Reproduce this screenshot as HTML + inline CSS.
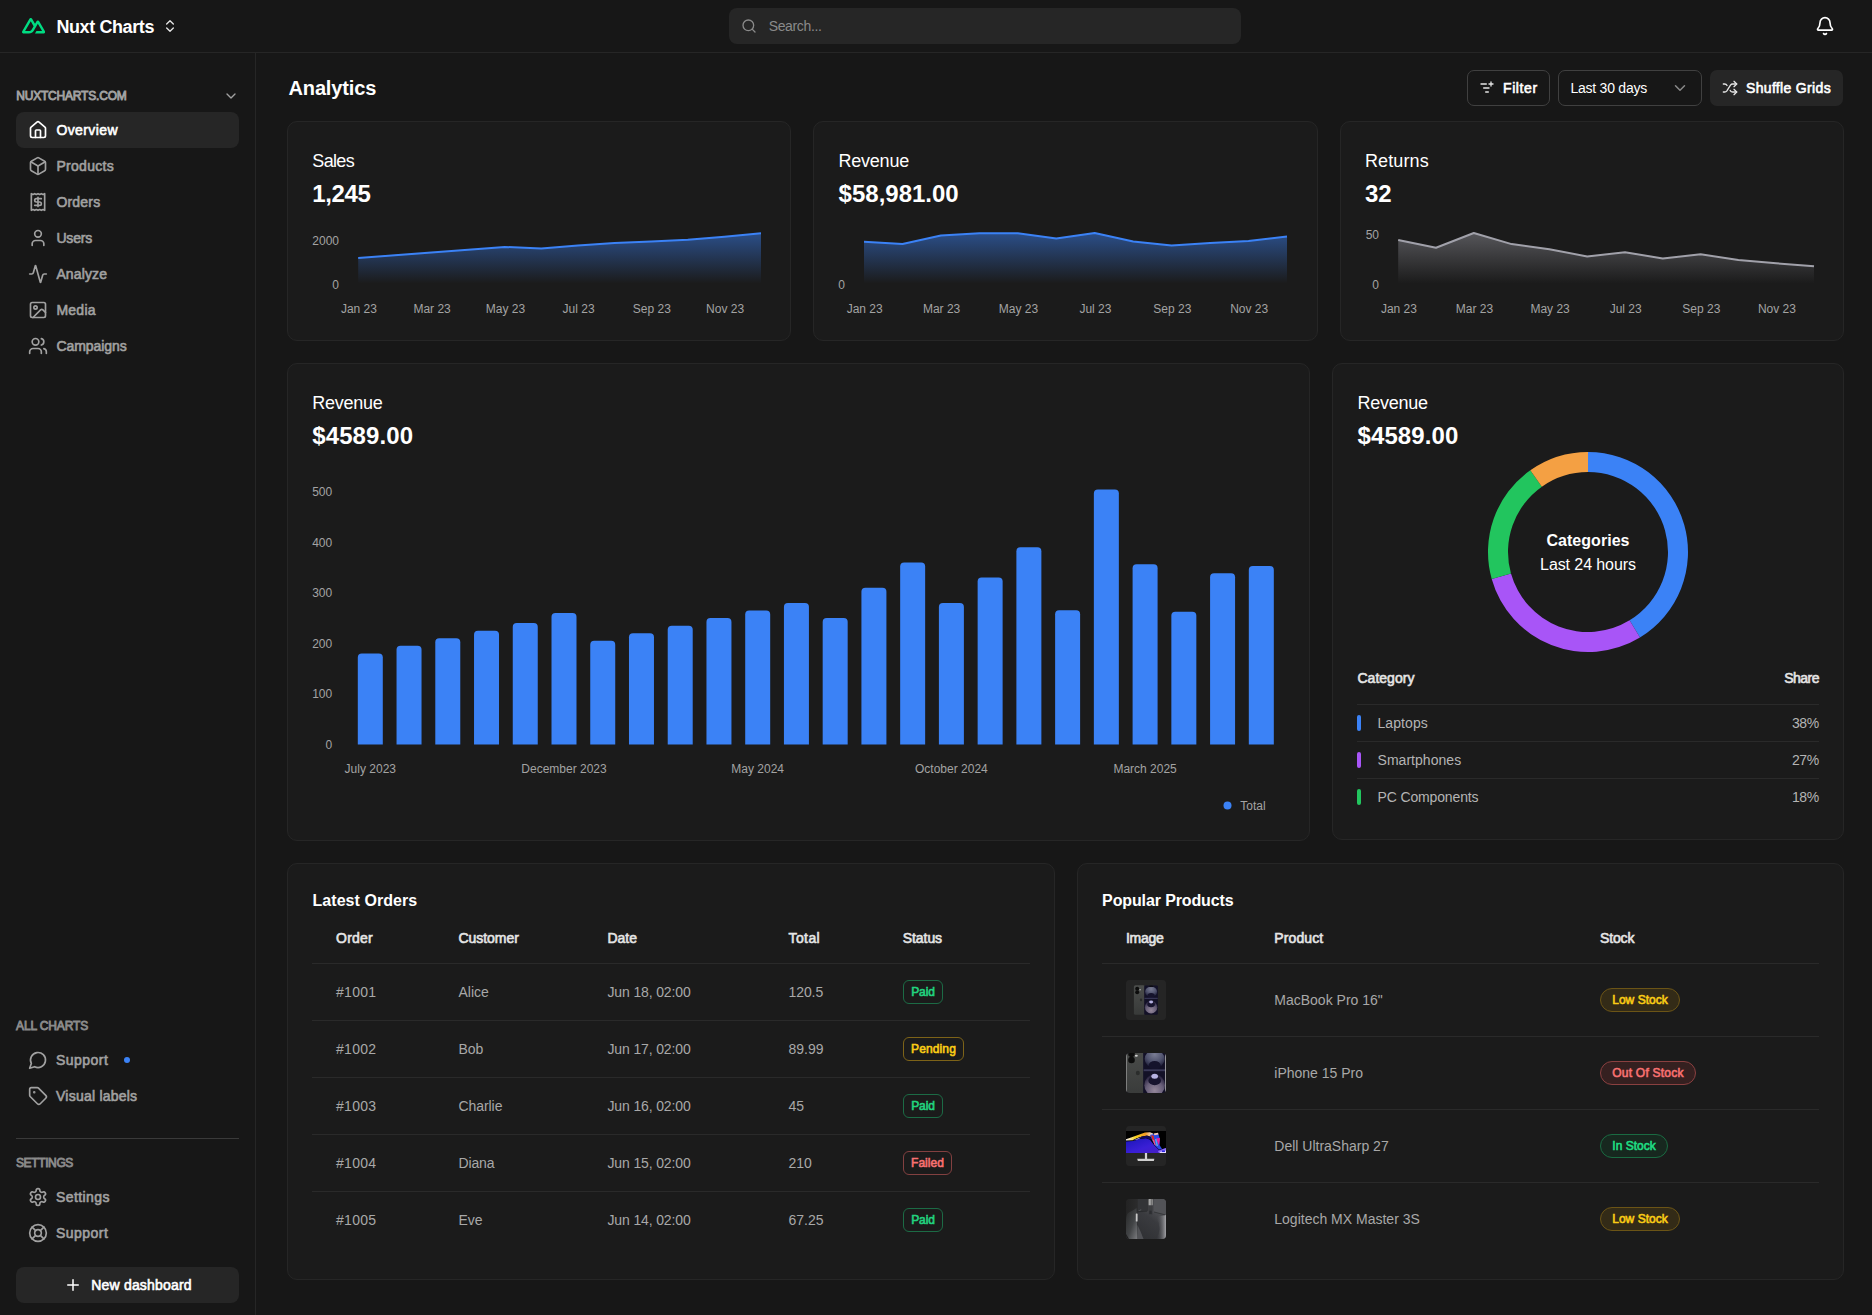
<!DOCTYPE html>
<html lang="en"><head><meta charset="utf-8"><title>Nuxt Charts - Analytics</title>
<style>
html,body{margin:0;padding:0;background:#171717;}
body{width:1872px;height:1315px;position:relative;overflow:hidden;font-family:"Liberation Sans", sans-serif;color:#fff;}
</style></head><body>
<div style="position:absolute;left:0px;top:52px;width:1872px;height:1px;box-sizing:border-box;background:#262626;"></div>
<svg style="position:absolute;left:22.3px;top:18.2px" width="23.2" height="15.5" viewBox="0 150 900 600"><path fill="#00dc82" d="M504.908 750H839.476C850.103 750.001 860.542 747.229 869.745 741.963C878.948 736.696 886.589 729.121 891.9 719.999C897.211 710.876 900.005 700.529 900 689.997C899.995 679.465 897.193 669.12 891.873 660.002L667.187 274.289C661.876 265.169 654.237 257.595 645.036 252.329C635.835 247.064 625.398 244.291 614.773 244.291C604.149 244.291 593.711 247.064 584.511 252.329C575.31 257.595 567.67 265.169 562.36 274.289L504.908 372.979L392.581 179.993C387.266 170.874 379.623 163.302 370.42 158.038C361.216 152.774 350.777 150.002 340.151 150.002C329.525 150.002 319.086 152.774 309.883 158.038C300.679 163.302 293.036 170.874 287.721 179.993L8.12649 660.002C2.80743 669.12 0.00462935 679.465 5.72978e-06 689.997C-0.00461789 700.529 2.78909 710.876 8.10015 719.999C13.4112 729.121 21.0523 736.696 30.255 741.963C39.4576 747.229 49.8973 750.001 60.524 750H270.538C353.748 750 415.112 713.775 457.336 643.101L559.849 467.145L614.757 372.979L779.547 655.834H559.849L504.908 750ZM267.114 655.737L120.551 655.704L340.249 278.586L449.87 467.145L376.474 593.175C348.433 639.03 316.577 655.737 267.114 655.737Z"/></svg>
<div style="position:absolute;top:16.56px;line-height:20px;font-size:18px;font-weight:700;color:#fff;white-space:nowrap;letter-spacing:-0.4px;left:56.4px;">Nuxt Charts</div>
<svg style="position:absolute;left:162.00px;top:18.00px" width="16" height="16" viewBox="0 0 24 24" fill="none" stroke="#e5e5e5" stroke-width="2" stroke-linecap="round" stroke-linejoin="round"><path d="m7 15 5 5 5-5"/><path d="m7 9 5-5 5 5"/></svg>
<div style="position:absolute;left:729px;top:8px;width:512px;height:36px;box-sizing:border-box;background:#262626;border-radius:8px;"></div>
<svg style="position:absolute;left:741.00px;top:18.00px" width="16" height="16" viewBox="0 0 24 24" fill="none" stroke="#8a8a8a" stroke-width="2" stroke-linecap="round" stroke-linejoin="round"><circle cx="11" cy="11" r="8"/><path d="m21 21-4.3-4.3"/></svg>
<div style="position:absolute;top:16.15px;line-height:20px;font-size:14px;font-weight:400;color:#8a8a8a;white-space:nowrap;letter-spacing:-0.35px;left:768.7px;">Search...</div>
<svg style="position:absolute;left:1815.00px;top:16.00px" width="20" height="20" viewBox="0 0 24 24" fill="none" stroke="#fff" stroke-width="2" stroke-linecap="round" stroke-linejoin="round"><path d="M10.268 21a2 2 0 0 0 3.464 0"/><path d="M3.262 15.326A1 1 0 0 0 4 17h16a1 1 0 0 0 .74-1.673C19.41 13.956 18 12.499 18 8A6 6 0 0 0 6 8c0 4.499-1.411 5.956-2.738 7.326"/></svg>
<div style="position:absolute;left:255px;top:53px;width:1px;height:1262px;box-sizing:border-box;background:#262626;"></div>
<div style="position:absolute;top:85.84px;line-height:20px;font-size:12px;font-weight:400;color:#a1a1a1;white-space:nowrap;-webkit-text-stroke:0.85px #a1a1a1;letter-spacing:-0.19px;left:16.2px;">NUXTCHARTS.COM</div>
<svg style="position:absolute;left:222.80px;top:88.00px" width="16" height="16" viewBox="0 0 24 24" fill="none" stroke="#a1a1a1" stroke-width="2" stroke-linecap="round" stroke-linejoin="round"><path d="m6 9 6 6 6-6"/></svg>
<div style="position:absolute;left:16px;top:112px;width:223px;height:36px;box-sizing:border-box;background:#262626;border-radius:8px;"></div>
<svg style="position:absolute;left:28.00px;top:120.00px" width="20" height="20" viewBox="0 0 24 24" fill="none" stroke="#fff" stroke-width="2" stroke-linecap="round" stroke-linejoin="round"><path d="M15 21v-8a1 1 0 0 0-1-1h-4a1 1 0 0 0-1 1v8"/><path d="M3 10a2 2 0 0 1 .709-1.528l7-5.999a2 2 0 0 1 2.582 0l7 5.999A2 2 0 0 1 21 10v9a2 2 0 0 1-2 2H5a2 2 0 0 1-2-2z"/></svg>
<div style="position:absolute;top:119.65px;line-height:20px;font-size:14px;font-weight:400;color:#fff;white-space:nowrap;-webkit-text-stroke:0.6px #fff;letter-spacing:0.41px;left:56.4px;">Overview</div>
<svg style="position:absolute;left:28.00px;top:156.00px" width="20" height="20" viewBox="0 0 24 24" fill="none" stroke="#a1a1a1" stroke-width="2" stroke-linecap="round" stroke-linejoin="round"><path d="M21 8a2 2 0 0 0-1-1.73l-7-4a2 2 0 0 0-2 0l-7 4A2 2 0 0 0 3 8v8a2 2 0 0 0 1 1.73l7 4a2 2 0 0 0 2 0l7-4A2 2 0 0 0 21 16Z"/><path d="m3.3 7 8.7 5 8.7-5"/><path d="M12 22V12"/></svg>
<div style="position:absolute;top:155.65px;line-height:20px;font-size:14px;font-weight:400;color:#a1a1a1;white-space:nowrap;-webkit-text-stroke:0.6px #a1a1a1;letter-spacing:0.31px;left:56.4px;">Products</div>
<svg style="position:absolute;left:28.00px;top:192.00px" width="20" height="20" viewBox="0 0 24 24" fill="none" stroke="#a1a1a1" stroke-width="2" stroke-linecap="round" stroke-linejoin="round"><path d="M4 2v20l2-1 2 1 2-1 2 1 2-1 2 1 2-1 2 1V2l-2 1-2-1-2 1-2-1-2 1-2-1-2 1Z"/><path d="M16 8h-6a2 2 0 1 0 0 4h4a2 2 0 1 1 0 4H8"/><path d="M12 17.5v-11"/></svg>
<div style="position:absolute;top:191.65px;line-height:20px;font-size:14px;font-weight:400;color:#a1a1a1;white-space:nowrap;-webkit-text-stroke:0.6px #a1a1a1;letter-spacing:0.2px;left:56.4px;">Orders</div>
<svg style="position:absolute;left:28.00px;top:228.00px" width="20" height="20" viewBox="0 0 24 24" fill="none" stroke="#a1a1a1" stroke-width="2" stroke-linecap="round" stroke-linejoin="round"><path d="M19 21v-2a4 4 0 0 0-4-4H9a4 4 0 0 0-4 4v2"/><circle cx="12" cy="7" r="4"/></svg>
<div style="position:absolute;top:227.65px;line-height:20px;font-size:14px;font-weight:400;color:#a1a1a1;white-space:nowrap;-webkit-text-stroke:0.6px #a1a1a1;letter-spacing:-0.17px;left:56.4px;">Users</div>
<svg style="position:absolute;left:28.00px;top:264.00px" width="20" height="20" viewBox="0 0 24 24" fill="none" stroke="#a1a1a1" stroke-width="2" stroke-linecap="round" stroke-linejoin="round"><path d="M22 12h-2.48a2 2 0 0 0-1.93 1.46l-2.35 8.36a.25.25 0 0 1-.48 0L9.24 2.18a.25.25 0 0 0-.48 0l-2.35 8.36A2 2 0 0 1 4.49 12H2"/></svg>
<div style="position:absolute;top:263.65px;line-height:20px;font-size:14px;font-weight:400;color:#a1a1a1;white-space:nowrap;-webkit-text-stroke:0.6px #a1a1a1;letter-spacing:0.13px;left:56.4px;">Analyze</div>
<svg style="position:absolute;left:28.00px;top:300.00px" width="20" height="20" viewBox="0 0 24 24" fill="none" stroke="#a1a1a1" stroke-width="2" stroke-linecap="round" stroke-linejoin="round"><rect width="18" height="18" x="3" y="3" rx="2" ry="2"/><circle cx="9" cy="9" r="2"/><path d="m21 15-3.086-3.086a2 2 0 0 0-2.828 0L6 21"/></svg>
<div style="position:absolute;top:299.65px;line-height:20px;font-size:14px;font-weight:400;color:#a1a1a1;white-space:nowrap;-webkit-text-stroke:0.6px #a1a1a1;letter-spacing:0.25px;left:56.4px;">Media</div>
<svg style="position:absolute;left:28.00px;top:336.00px" width="20" height="20" viewBox="0 0 24 24" fill="none" stroke="#a1a1a1" stroke-width="2" stroke-linecap="round" stroke-linejoin="round"><path d="M16 21v-2a4 4 0 0 0-4-4H6a4 4 0 0 0-4 4v2"/><circle cx="9" cy="7" r="4"/><path d="M22 21v-2a4 4 0 0 0-3-3.87"/><path d="M16 3.13a4 4 0 0 1 0 7.75"/></svg>
<div style="position:absolute;top:335.65px;line-height:20px;font-size:14px;font-weight:400;color:#a1a1a1;white-space:nowrap;-webkit-text-stroke:0.6px #a1a1a1;letter-spacing:-0.05px;left:56.4px;">Campaigns</div>
<div style="position:absolute;top:1015.64px;line-height:20px;font-size:12px;font-weight:400;color:#8a8a8a;white-space:nowrap;-webkit-text-stroke:0.85px #8a8a8a;letter-spacing:-0.12px;left:16px;">ALL CHARTS</div>
<svg style="position:absolute;left:28.00px;top:1050.00px" width="20" height="20" viewBox="0 0 24 24" fill="none" stroke="#a1a1a1" stroke-width="2" stroke-linecap="round" stroke-linejoin="round"><path d="M7.9 20A9 9 0 1 0 4 16.1L2 22Z"/></svg>
<div style="position:absolute;top:1049.95px;line-height:20px;font-size:14px;font-weight:400;color:#a1a1a1;white-space:nowrap;-webkit-text-stroke:0.6px #a1a1a1;letter-spacing:0.46px;left:56px;">Support</div>
<div style="position:absolute;left:124px;top:1057px;width:6px;height:6px;box-sizing:border-box;background:#3b82f6;border-radius:3px;"></div>
<svg style="position:absolute;left:28.00px;top:1086.00px" width="20" height="20" viewBox="0 0 24 24" fill="none" stroke="#a1a1a1" stroke-width="2" stroke-linecap="round" stroke-linejoin="round"><path d="M12.586 2.586A2 2 0 0 0 11.172 2H4a2 2 0 0 0-2 2v7.172a2 2 0 0 0 .586 1.414l8.704 8.704a2.426 2.426 0 0 0 3.42 0l6.58-6.58a2.426 2.426 0 0 0 0-3.42z"/><circle cx="7.5" cy="7.5" r=".5" fill="currentColor"/></svg>
<div style="position:absolute;top:1085.75px;line-height:20px;font-size:14px;font-weight:400;color:#a1a1a1;white-space:nowrap;-webkit-text-stroke:0.6px #a1a1a1;letter-spacing:0.23px;left:56px;">Visual labels</div>
<div style="position:absolute;left:16px;top:1138px;width:223px;height:1px;box-sizing:border-box;background:#3a3a3a;"></div>
<div style="position:absolute;top:1152.64px;line-height:20px;font-size:12px;font-weight:400;color:#8a8a8a;white-space:nowrap;-webkit-text-stroke:0.85px #8a8a8a;letter-spacing:-0.38px;left:16px;">SETTINGS</div>
<svg style="position:absolute;left:28.00px;top:1187.00px" width="20" height="20" viewBox="0 0 24 24" fill="none" stroke="#a1a1a1" stroke-width="2" stroke-linecap="round" stroke-linejoin="round"><path d="M12.22 2h-.44a2 2 0 0 0-2 2v.18a2 2 0 0 1-1 1.73l-.43.25a2 2 0 0 1-2 0l-.15-.08a2 2 0 0 0-2.73.73l-.22.38a2 2 0 0 0 .73 2.73l.15.1a2 2 0 0 1 1 1.72v.51a2 2 0 0 1-1 1.74l-.15.09a2 2 0 0 0-.73 2.73l.22.38a2 2 0 0 0 2.73.73l.15-.08a2 2 0 0 1 2 0l.43.25a2 2 0 0 1 1 1.73V20a2 2 0 0 0 2 2h.44a2 2 0 0 0 2-2v-.18a2 2 0 0 1 1-1.73l.43-.25a2 2 0 0 1 2 0l.15.08a2 2 0 0 0 2.73-.73l.22-.39a2 2 0 0 0-.73-2.73l-.15-.08a2 2 0 0 1-1-1.74v-.5a2 2 0 0 1 1-1.74l.15-.09a2 2 0 0 0 .73-2.73l-.22-.38a2 2 0 0 0-2.73-.73l-.15.08a2 2 0 0 1-2 0l-.43-.25a2 2 0 0 1-1-1.73V4a2 2 0 0 0-2-2z"/><circle cx="12" cy="12" r="3"/></svg>
<div style="position:absolute;top:1186.75px;line-height:20px;font-size:14px;font-weight:400;color:#a1a1a1;white-space:nowrap;-webkit-text-stroke:0.6px #a1a1a1;letter-spacing:0.4px;left:56px;">Settings</div>
<svg style="position:absolute;left:28.00px;top:1223.00px" width="20" height="20" viewBox="0 0 24 24" fill="none" stroke="#a1a1a1" stroke-width="2" stroke-linecap="round" stroke-linejoin="round"><circle cx="12" cy="12" r="10"/><path d="m4.93 4.93 4.24 4.24"/><path d="m14.83 9.17 4.24-4.24"/><path d="m14.83 14.83 4.24 4.24"/><path d="m9.17 14.83-4.24 4.24"/><circle cx="12" cy="12" r="4"/></svg>
<div style="position:absolute;top:1222.75px;line-height:20px;font-size:14px;font-weight:400;color:#a1a1a1;white-space:nowrap;-webkit-text-stroke:0.6px #a1a1a1;letter-spacing:0.46px;left:56px;">Support</div>
<div style="position:absolute;left:16px;top:1267px;width:223px;height:36px;box-sizing:border-box;background:#262626;border-radius:8px;"></div>
<svg style="position:absolute;left:63.80px;top:1276.00px" width="18" height="18" viewBox="0 0 24 24" fill="none" stroke="#fff" stroke-width="2" stroke-linecap="round" stroke-linejoin="round"><path d="M5 12h14"/><path d="M12 5v14"/></svg>
<div style="position:absolute;top:1274.95px;line-height:20px;font-size:14px;font-weight:400;color:#fff;white-space:nowrap;-webkit-text-stroke:0.6px #fff;letter-spacing:0.18px;left:91.3px;">New dashboard</div>
<div style="position:absolute;top:78.37px;line-height:20px;font-size:20px;font-weight:700;color:#fff;white-space:nowrap;letter-spacing:-0.14px;left:288.5px;">Analytics</div>
<div style="position:absolute;left:1467px;top:70px;width:83px;height:36px;box-sizing:border-box;border:1px solid #404040;border-radius:7px;"></div>
<svg style="position:absolute;left:1479.30px;top:79.50px" width="16" height="16" viewBox="0 0 24 24" fill="none" stroke="#e5e5e5" stroke-width="2" stroke-linecap="round" stroke-linejoin="round"><path d="M10 18h4"/><path d="M11 6H3"/><path d="M15 6h6"/><path d="M18 9V3"/><path d="M7 12h8"/></svg>
<div style="position:absolute;top:78.15px;line-height:20px;font-size:14px;font-weight:400;color:#fff;white-space:nowrap;-webkit-text-stroke:0.6px #fff;letter-spacing:0.6px;left:1503px;">Filter</div>
<div style="position:absolute;left:1558px;top:70px;width:144px;height:36px;box-sizing:border-box;border:1px solid #404040;border-radius:7px;"></div>
<div style="position:absolute;top:78.15px;line-height:20px;font-size:14px;font-weight:400;color:#fff;white-space:nowrap;letter-spacing:-0.23px;left:1570.4px;">Last 30 days</div>
<svg style="position:absolute;left:1671.00px;top:79.00px" width="18" height="18" viewBox="0 0 24 24" fill="none" stroke="#8a8a8a" stroke-width="2" stroke-linecap="round" stroke-linejoin="round"><path d="m6 9 6 6 6-6"/></svg>
<div style="position:absolute;left:1710px;top:70px;width:133px;height:36px;box-sizing:border-box;background:#262626;border-radius:7px;"></div>
<svg style="position:absolute;left:1722.00px;top:80.00px" width="16" height="16" viewBox="0 0 24 24" fill="none" stroke="#e5e5e5" stroke-width="2" stroke-linecap="round" stroke-linejoin="round"><path d="m18 14 4 4-4 4"/><path d="m18 2 4 4-4 4"/><path d="M2 18h1.973a4 4 0 0 0 3.3-1.7l5.454-8.6a4 4 0 0 1 3.3-1.7H22"/><path d="M2 6h1.972a4 4 0 0 1 3.6 2.2"/><path d="M22 18h-6.041a4 4 0 0 1-3.3-1.8l-.359-.45"/></svg>
<div style="position:absolute;top:78.15px;line-height:20px;font-size:14px;font-weight:400;color:#fff;white-space:nowrap;-webkit-text-stroke:0.6px #fff;letter-spacing:0.33px;left:1746px;">Shuffle Grids</div>
<div style="position:absolute;left:287px;top:121px;width:504px;height:220px;box-sizing:border-box;background:#1b1b1b;border:1px solid #262626;border-radius:10px;"></div>
<div style="position:absolute;left:813px;top:121px;width:505px;height:220px;box-sizing:border-box;background:#1b1b1b;border:1px solid #262626;border-radius:10px;"></div>
<div style="position:absolute;left:1340px;top:121px;width:504px;height:220px;box-sizing:border-box;background:#1b1b1b;border:1px solid #262626;border-radius:10px;"></div>
<div style="position:absolute;left:287px;top:363px;width:1023px;height:478px;box-sizing:border-box;background:#1b1b1b;border:1px solid #262626;border-radius:10px;"></div>
<div style="position:absolute;left:1332px;top:363px;width:512px;height:477px;box-sizing:border-box;background:#1b1b1b;border:1px solid #262626;border-radius:10px;"></div>
<div style="position:absolute;left:287px;top:863px;width:768px;height:417px;box-sizing:border-box;background:#1b1b1b;border:1px solid #262626;border-radius:10px;"></div>
<div style="position:absolute;left:1077px;top:863px;width:767px;height:417px;box-sizing:border-box;background:#1b1b1b;border:1px solid #262626;border-radius:10px;"></div>
<svg style="position:absolute;left:0;top:0" width="1872" height="1315" viewBox="0 0 1872 1315" font-family='"Liberation Sans", sans-serif'><defs><linearGradient id="g1" x1="0" y1="0" x2="0" y2="1"><stop offset="0" stop-color="#3b82f6" stop-opacity="0.5"/><stop offset="1" stop-color="#3b82f6" stop-opacity="0"/></linearGradient></defs><polygon points="358.2,283.5 358.2,258.1 394.8,255.3 431.4,252.5 468.1,249.7 504.7,246.9 541.3,248.5 577.9,245.5 614.5,243.1 651.1,241.5 687.8,239.7 724.4,236.7 761.0,233.3 761.0,283.5" fill="url(#g1)"/><polyline points="358.2,258.1 394.8,255.3 431.4,252.5 468.1,249.7 504.7,246.9 541.3,248.5 577.9,245.5 614.5,243.1 651.1,241.5 687.8,239.7 724.4,236.7 761.0,233.3" fill="none" stroke="#3b82f6" stroke-width="2" stroke-linejoin="round"/><text x="358.9" y="312.8" text-anchor="middle" font-size="12" fill="#a3a3a3">Jan 23</text><text x="432.1" y="312.8" text-anchor="middle" font-size="12" fill="#a3a3a3">Mar 23</text><text x="505.4" y="312.8" text-anchor="middle" font-size="12" fill="#a3a3a3">May 23</text><text x="578.6" y="312.8" text-anchor="middle" font-size="12" fill="#a3a3a3">Jul 23</text><text x="651.8" y="312.8" text-anchor="middle" font-size="12" fill="#a3a3a3">Sep 23</text><text x="725.1" y="312.8" text-anchor="middle" font-size="12" fill="#a3a3a3">Nov 23</text><text x="339" y="244.9" text-anchor="end" font-size="12" fill="#a3a3a3">2000</text><text x="339" y="288.7" text-anchor="end" font-size="12" fill="#a3a3a3">0</text><defs><linearGradient id="g2" x1="0" y1="0" x2="0" y2="1"><stop offset="0" stop-color="#3b82f6" stop-opacity="0.5"/><stop offset="1" stop-color="#3b82f6" stop-opacity="0"/></linearGradient></defs><polygon points="864.0,283.5 864.0,241.7 902.5,244.1 940.9,235.4 979.4,233.3 1017.8,233.3 1056.3,238.4 1094.7,233.0 1133.2,241.4 1171.6,245.6 1210.1,242.9 1248.5,241.1 1287.0,236.6 1287.0,283.5" fill="url(#g2)"/><polyline points="864.0,241.7 902.5,244.1 940.9,235.4 979.4,233.3 1017.8,233.3 1056.3,238.4 1094.7,233.0 1133.2,241.4 1171.6,245.6 1210.1,242.9 1248.5,241.1 1287.0,236.6" fill="none" stroke="#3b82f6" stroke-width="2" stroke-linejoin="round"/><text x="864.7" y="312.8" text-anchor="middle" font-size="12" fill="#a3a3a3">Jan 23</text><text x="941.6" y="312.8" text-anchor="middle" font-size="12" fill="#a3a3a3">Mar 23</text><text x="1018.5" y="312.8" text-anchor="middle" font-size="12" fill="#a3a3a3">May 23</text><text x="1095.4" y="312.8" text-anchor="middle" font-size="12" fill="#a3a3a3">Jul 23</text><text x="1172.3" y="312.8" text-anchor="middle" font-size="12" fill="#a3a3a3">Sep 23</text><text x="1249.2" y="312.8" text-anchor="middle" font-size="12" fill="#a3a3a3">Nov 23</text><text x="845" y="288.7" text-anchor="end" font-size="12" fill="#a3a3a3">0</text><defs><linearGradient id="g3" x1="0" y1="0" x2="0" y2="1"><stop offset="0" stop-color="#a1a1aa" stop-opacity="0.44"/><stop offset="1" stop-color="#a1a1aa" stop-opacity="0"/></linearGradient></defs><polygon points="1398.2,283.5 1398.2,239.9 1436.0,247.7 1473.8,233.0 1511.6,244.1 1549.4,249.2 1587.2,256.4 1625.0,252.2 1662.8,258.5 1700.6,254.3 1738.4,260.0 1776.2,263.3 1814.0,266.2 1814.0,283.5" fill="url(#g3)"/><polyline points="1398.2,239.9 1436.0,247.7 1473.8,233.0 1511.6,244.1 1549.4,249.2 1587.2,256.4 1625.0,252.2 1662.8,258.5 1700.6,254.3 1738.4,260.0 1776.2,263.3 1814.0,266.2" fill="none" stroke="#a1a1aa" stroke-width="2" stroke-linejoin="round"/><text x="1398.9" y="312.8" text-anchor="middle" font-size="12" fill="#a3a3a3">Jan 23</text><text x="1474.5" y="312.8" text-anchor="middle" font-size="12" fill="#a3a3a3">Mar 23</text><text x="1550.1" y="312.8" text-anchor="middle" font-size="12" fill="#a3a3a3">May 23</text><text x="1625.7" y="312.8" text-anchor="middle" font-size="12" fill="#a3a3a3">Jul 23</text><text x="1701.3" y="312.8" text-anchor="middle" font-size="12" fill="#a3a3a3">Sep 23</text><text x="1776.9" y="312.8" text-anchor="middle" font-size="12" fill="#a3a3a3">Nov 23</text><text x="1379" y="239.0" text-anchor="end" font-size="12" fill="#a3a3a3">50</text><text x="1379" y="288.7" text-anchor="end" font-size="12" fill="#a3a3a3">0</text><path fill="#3b82f6" d="M357.80,744.4 V657.43 Q357.80,653.43 361.80,653.43 H378.80 Q382.80,653.43 382.80,657.43 V744.4 Z"/><path fill="#3b82f6" d="M396.54,744.4 V649.85 Q396.54,645.85 400.54,645.85 H417.54 Q421.54,645.85 421.54,649.85 V744.4 Z"/><path fill="#3b82f6" d="M435.28,744.4 V642.27 Q435.28,638.27 439.28,638.27 H456.28 Q460.28,638.27 460.28,642.27 V744.4 Z"/><path fill="#3b82f6" d="M474.02,744.4 V634.68 Q474.02,630.68 478.02,630.68 H495.02 Q499.02,630.68 499.02,634.68 V744.4 Z"/><path fill="#3b82f6" d="M512.76,744.4 V627.10 Q512.76,623.10 516.76,623.10 H533.76 Q537.76,623.10 537.76,627.10 V744.4 Z"/><path fill="#3b82f6" d="M551.50,744.4 V617.00 Q551.50,613.00 555.50,613.00 H572.50 Q576.50,613.00 576.50,617.00 V744.4 Z"/><path fill="#3b82f6" d="M590.24,744.4 V644.79 Q590.24,640.79 594.24,640.79 H611.24 Q615.24,640.79 615.24,644.79 V744.4 Z"/><path fill="#3b82f6" d="M628.98,744.4 V637.21 Q628.98,633.21 632.98,633.21 H649.98 Q653.98,633.21 653.98,637.21 V744.4 Z"/><path fill="#3b82f6" d="M667.72,744.4 V629.63 Q667.72,625.63 671.72,625.63 H688.72 Q692.72,625.63 692.72,629.63 V744.4 Z"/><path fill="#3b82f6" d="M706.46,744.4 V622.05 Q706.46,618.05 710.46,618.05 H727.46 Q731.46,618.05 731.46,622.05 V744.4 Z"/><path fill="#3b82f6" d="M745.20,744.4 V614.47 Q745.20,610.47 749.20,610.47 H766.20 Q770.20,610.47 770.20,614.47 V744.4 Z"/><path fill="#3b82f6" d="M783.94,744.4 V606.89 Q783.94,602.89 787.94,602.89 H804.94 Q808.94,602.89 808.94,606.89 V744.4 Z"/><path fill="#3b82f6" d="M822.68,744.4 V622.05 Q822.68,618.05 826.68,618.05 H843.68 Q847.68,618.05 847.68,622.05 V744.4 Z"/><path fill="#3b82f6" d="M861.42,744.4 V591.73 Q861.42,587.73 865.42,587.73 H882.42 Q886.42,587.73 886.42,591.73 V744.4 Z"/><path fill="#3b82f6" d="M900.16,744.4 V566.46 Q900.16,562.46 904.16,562.46 H921.16 Q925.16,562.46 925.16,566.46 V744.4 Z"/><path fill="#3b82f6" d="M938.90,744.4 V606.89 Q938.90,602.89 942.90,602.89 H959.90 Q963.90,602.89 963.90,606.89 V744.4 Z"/><path fill="#3b82f6" d="M977.64,744.4 V581.62 Q977.64,577.62 981.64,577.62 H998.64 Q1002.64,577.62 1002.64,581.62 V744.4 Z"/><path fill="#3b82f6" d="M1016.38,744.4 V551.29 Q1016.38,547.29 1020.38,547.29 H1037.38 Q1041.38,547.29 1041.38,551.29 V744.4 Z"/><path fill="#3b82f6" d="M1055.12,744.4 V614.22 Q1055.12,610.22 1059.12,610.22 H1076.12 Q1080.12,610.22 1080.12,614.22 V744.4 Z"/><path fill="#3b82f6" d="M1093.86,744.4 V493.58 Q1093.86,489.58 1097.86,489.58 H1114.86 Q1118.86,489.58 1118.86,493.58 V744.4 Z"/><path fill="#3b82f6" d="M1132.60,744.4 V568.22 Q1132.60,564.22 1136.60,564.22 H1153.60 Q1157.60,564.22 1157.60,568.22 V744.4 Z"/><path fill="#3b82f6" d="M1171.34,744.4 V615.68 Q1171.34,611.68 1175.34,611.68 H1192.34 Q1196.34,611.68 1196.34,615.68 V744.4 Z"/><path fill="#3b82f6" d="M1210.08,744.4 V577.22 Q1210.08,573.22 1214.08,573.22 H1231.08 Q1235.08,573.22 1235.08,577.22 V744.4 Z"/><path fill="#3b82f6" d="M1248.82,744.4 V569.89 Q1248.82,565.89 1252.82,565.89 H1269.82 Q1273.82,565.89 1273.82,569.89 V744.4 Z"/><text x="370.3" y="773.1" text-anchor="middle" font-size="12" fill="#a3a3a3">July 2023</text><text x="564.0" y="773.1" text-anchor="middle" font-size="12" fill="#a3a3a3">December 2023</text><text x="757.7" y="773.1" text-anchor="middle" font-size="12" fill="#a3a3a3">May 2024</text><text x="951.4" y="773.1" text-anchor="middle" font-size="12" fill="#a3a3a3">October 2024</text><text x="1145.1" y="773.1" text-anchor="middle" font-size="12" fill="#a3a3a3">March 2025</text><text x="332.2" y="748.9" text-anchor="end" font-size="12" fill="#a3a3a3">0</text><text x="332.2" y="698.4" text-anchor="end" font-size="12" fill="#a3a3a3">100</text><text x="332.2" y="647.8" text-anchor="end" font-size="12" fill="#a3a3a3">200</text><text x="332.2" y="597.3" text-anchor="end" font-size="12" fill="#a3a3a3">300</text><text x="332.2" y="546.7" text-anchor="end" font-size="12" fill="#a3a3a3">400</text><text x="332.2" y="496.2" text-anchor="end" font-size="12" fill="#a3a3a3">500</text><circle cx="1227.5" cy="805.6" r="4" fill="#3b82f6"/><text x="1240.3" y="809.9" font-size="12" fill="#a3a3a3">Total</text><path fill="#3b82f6" d="M1588.00,452.00 A100,100 0 0 1 1639.96,637.44 L1629.57,620.35 A80,80 0 0 0 1588.00,472.00 Z"/><path fill="#a855f7" d="M1639.96,637.44 A100,100 0 0 1 1491.71,578.98 L1510.97,573.58 A80,80 0 0 0 1629.57,620.35 Z"/><path fill="#22c55e" d="M1491.71,578.98 A100,100 0 0 1 1530.33,470.30 L1541.87,486.64 A80,80 0 0 0 1510.97,573.58 Z"/><path fill="#f4a043" d="M1530.33,470.30 A100,100 0 0 1 1588.00,452.00 L1588.00,472.00 A80,80 0 0 0 1541.87,486.64 Z"/></svg>
<div style="position:absolute;top:150.56px;line-height:20px;font-size:18px;font-weight:400;color:#fff;white-space:nowrap;letter-spacing:-0.65px;left:312.3px;">Sales</div>
<div style="position:absolute;top:183.88px;line-height:20px;font-size:24px;font-weight:700;color:#fff;white-space:nowrap;letter-spacing:-0.35px;left:312.3px;">1,245</div>
<div style="position:absolute;top:150.56px;line-height:20px;font-size:18px;font-weight:400;color:#fff;white-space:nowrap;letter-spacing:-0.25px;left:838.6px;">Revenue</div>
<div style="position:absolute;top:183.88px;line-height:20px;font-size:24px;font-weight:700;color:#fff;white-space:nowrap;left:838.6px;">$58,981.00</div>
<div style="position:absolute;top:150.56px;line-height:20px;font-size:18px;font-weight:400;color:#fff;white-space:nowrap;letter-spacing:0.14px;left:1364.9px;">Returns</div>
<div style="position:absolute;top:183.88px;line-height:20px;font-size:24px;font-weight:700;color:#fff;white-space:nowrap;left:1364.9px;">32</div>
<div style="position:absolute;top:392.76px;line-height:20px;font-size:18px;font-weight:400;color:#fff;white-space:nowrap;letter-spacing:-0.25px;left:312.3px;">Revenue</div>
<div style="position:absolute;top:425.98px;line-height:20px;font-size:24px;font-weight:700;color:#fff;white-space:nowrap;letter-spacing:0.09px;left:312.3px;">$4589.00</div>
<div style="position:absolute;top:392.76px;line-height:20px;font-size:18px;font-weight:400;color:#fff;white-space:nowrap;letter-spacing:-0.25px;left:1357.5px;">Revenue</div>
<div style="position:absolute;top:425.98px;line-height:20px;font-size:24px;font-weight:700;color:#fff;white-space:nowrap;letter-spacing:0.09px;left:1357.5px;">$4589.00</div>
<div style="position:absolute;top:531.06px;line-height:20px;font-size:16px;font-weight:700;color:#fff;white-space:nowrap;letter-spacing:0.03px;left:1388px;width:400px;text-align:center;">Categories</div>
<div style="position:absolute;top:555.16px;line-height:20px;font-size:16px;font-weight:400;color:#fff;white-space:nowrap;letter-spacing:-0.09px;left:1388px;width:400px;text-align:center;">Last 24 hours</div>
<div style="position:absolute;top:667.95px;line-height:20px;font-size:14px;font-weight:400;color:#e5e5e5;white-space:nowrap;-webkit-text-stroke:0.6px #e5e5e5;letter-spacing:0.01px;left:1357.5px;">Category</div>
<div style="position:absolute;top:667.95px;line-height:20px;font-size:14px;font-weight:400;color:#e5e5e5;white-space:nowrap;-webkit-text-stroke:0.6px #e5e5e5;letter-spacing:-0.5px;right:53px;">Share</div>
<div style="position:absolute;left:1357px;top:704px;width:462px;height:1px;box-sizing:border-box;background:#2a2a2a;"></div>
<div style="position:absolute;left:1357px;top:715px;width:4px;height:16px;box-sizing:border-box;background:#3b82f6;border-radius:2px;"></div>
<div style="position:absolute;top:712.75px;line-height:20px;font-size:14px;font-weight:400;color:#b4b4b4;white-space:nowrap;letter-spacing:0.08px;left:1377.5px;">Laptops</div>
<div style="position:absolute;top:712.75px;line-height:20px;font-size:14px;font-weight:400;color:#b4b4b4;white-space:nowrap;letter-spacing:-0.3px;right:53px;">38%</div>
<div style="position:absolute;left:1357px;top:741px;width:462px;height:1px;box-sizing:border-box;background:#2a2a2a;"></div>
<div style="position:absolute;left:1357px;top:752px;width:4px;height:16px;box-sizing:border-box;background:#a855f7;border-radius:2px;"></div>
<div style="position:absolute;top:749.75px;line-height:20px;font-size:14px;font-weight:400;color:#b4b4b4;white-space:nowrap;letter-spacing:0.04px;left:1377.5px;">Smartphones</div>
<div style="position:absolute;top:749.75px;line-height:20px;font-size:14px;font-weight:400;color:#b4b4b4;white-space:nowrap;letter-spacing:-0.3px;right:53px;">27%</div>
<div style="position:absolute;left:1357px;top:778px;width:462px;height:1px;box-sizing:border-box;background:#2a2a2a;"></div>
<div style="position:absolute;left:1357px;top:789px;width:4px;height:16px;box-sizing:border-box;background:#22c55e;border-radius:2px;"></div>
<div style="position:absolute;top:786.75px;line-height:20px;font-size:14px;font-weight:400;color:#b4b4b4;white-space:nowrap;letter-spacing:-0.14px;left:1377.5px;">PC Components</div>
<div style="position:absolute;top:786.75px;line-height:20px;font-size:14px;font-weight:400;color:#b4b4b4;white-space:nowrap;letter-spacing:-0.3px;right:53px;">18%</div>
<div style="position:absolute;top:890.66px;line-height:20px;font-size:16px;font-weight:700;color:#fff;white-space:nowrap;letter-spacing:0.05px;left:312.5px;">Latest Orders</div>
<div style="position:absolute;top:927.75px;line-height:20px;font-size:14px;font-weight:400;color:#e5e5e5;white-space:nowrap;-webkit-text-stroke:0.6px #e5e5e5;letter-spacing:0.18px;left:336.1px;">Order</div>
<div style="position:absolute;top:927.75px;line-height:20px;font-size:14px;font-weight:400;color:#e5e5e5;white-space:nowrap;-webkit-text-stroke:0.6px #e5e5e5;letter-spacing:-0.05px;left:458.5px;">Customer</div>
<div style="position:absolute;top:927.75px;line-height:20px;font-size:14px;font-weight:400;color:#e5e5e5;white-space:nowrap;-webkit-text-stroke:0.6px #e5e5e5;letter-spacing:-0.02px;left:607.5px;">Date</div>
<div style="position:absolute;top:927.75px;line-height:20px;font-size:14px;font-weight:400;color:#e5e5e5;white-space:nowrap;-webkit-text-stroke:0.6px #e5e5e5;letter-spacing:0.4px;left:788.5px;">Total</div>
<div style="position:absolute;top:927.75px;line-height:20px;font-size:14px;font-weight:400;color:#e5e5e5;white-space:nowrap;-webkit-text-stroke:0.6px #e5e5e5;letter-spacing:-0.08px;left:902.8px;">Status</div>
<div style="position:absolute;left:312px;top:963px;width:718px;height:1px;box-sizing:border-box;background:#2a2a2a;"></div>
<div style="position:absolute;top:981.75px;line-height:20px;font-size:14px;font-weight:400;color:#a8a8a8;white-space:nowrap;letter-spacing:0.23px;left:336.1px;">#1001</div>
<div style="position:absolute;top:981.75px;line-height:20px;font-size:14px;font-weight:400;color:#a8a8a8;white-space:nowrap;left:458.5px;">Alice</div>
<div style="position:absolute;top:981.75px;line-height:20px;font-size:14px;font-weight:400;color:#a8a8a8;white-space:nowrap;letter-spacing:-0.14px;left:607.5px;">Jun 18, 02:00</div>
<div style="position:absolute;top:981.75px;line-height:20px;font-size:14px;font-weight:400;color:#a8a8a8;white-space:nowrap;letter-spacing:-0.09px;left:788.5px;">120.5</div>
<div style="position:absolute;left:903px;top:980px;width:40px;height:24px;box-sizing:border-box;border:1px solid #1c6b45;border-radius:6px;"></div>
<div style="position:absolute;top:982.04px;line-height:20px;font-size:12px;font-weight:400;color:#22d37f;white-space:nowrap;-webkit-text-stroke:0.6px #22d37f;letter-spacing:-0.11px;left:723.0px;width:400px;text-align:center;">Paid</div>
<div style="position:absolute;left:312px;top:1020px;width:718px;height:1px;box-sizing:border-box;background:#2a2a2a;"></div>
<div style="position:absolute;top:1038.75px;line-height:20px;font-size:14px;font-weight:400;color:#a8a8a8;white-space:nowrap;letter-spacing:0.23px;left:336.1px;">#1002</div>
<div style="position:absolute;top:1038.75px;line-height:20px;font-size:14px;font-weight:400;color:#a8a8a8;white-space:nowrap;left:458.5px;">Bob</div>
<div style="position:absolute;top:1038.75px;line-height:20px;font-size:14px;font-weight:400;color:#a8a8a8;white-space:nowrap;letter-spacing:-0.14px;left:607.5px;">Jun 17, 02:00</div>
<div style="position:absolute;top:1038.75px;line-height:20px;font-size:14px;font-weight:400;color:#a8a8a8;white-space:nowrap;left:788.5px;">89.99</div>
<div style="position:absolute;left:903px;top:1037px;width:61px;height:24px;box-sizing:border-box;border:1px solid #7d6318;border-radius:6px;"></div>
<div style="position:absolute;top:1039.04px;line-height:20px;font-size:12px;font-weight:400;color:#facc15;white-space:nowrap;-webkit-text-stroke:0.6px #facc15;letter-spacing:0.12px;left:733.5px;width:400px;text-align:center;">Pending</div>
<div style="position:absolute;left:312px;top:1077px;width:718px;height:1px;box-sizing:border-box;background:#2a2a2a;"></div>
<div style="position:absolute;top:1095.75px;line-height:20px;font-size:14px;font-weight:400;color:#a8a8a8;white-space:nowrap;letter-spacing:0.23px;left:336.1px;">#1003</div>
<div style="position:absolute;top:1095.75px;line-height:20px;font-size:14px;font-weight:400;color:#a8a8a8;white-space:nowrap;letter-spacing:-0.07px;left:458.5px;">Charlie</div>
<div style="position:absolute;top:1095.75px;line-height:20px;font-size:14px;font-weight:400;color:#a8a8a8;white-space:nowrap;letter-spacing:-0.14px;left:607.5px;">Jun 16, 02:00</div>
<div style="position:absolute;top:1095.75px;line-height:20px;font-size:14px;font-weight:400;color:#a8a8a8;white-space:nowrap;left:788.5px;">45</div>
<div style="position:absolute;left:903px;top:1094px;width:40px;height:24px;box-sizing:border-box;border:1px solid #1c6b45;border-radius:6px;"></div>
<div style="position:absolute;top:1096.04px;line-height:20px;font-size:12px;font-weight:400;color:#22d37f;white-space:nowrap;-webkit-text-stroke:0.6px #22d37f;letter-spacing:-0.11px;left:723.0px;width:400px;text-align:center;">Paid</div>
<div style="position:absolute;left:312px;top:1134px;width:718px;height:1px;box-sizing:border-box;background:#2a2a2a;"></div>
<div style="position:absolute;top:1152.75px;line-height:20px;font-size:14px;font-weight:400;color:#a8a8a8;white-space:nowrap;letter-spacing:0.23px;left:336.1px;">#1004</div>
<div style="position:absolute;top:1152.75px;line-height:20px;font-size:14px;font-weight:400;color:#a8a8a8;white-space:nowrap;letter-spacing:-0.14px;left:458.5px;">Diana</div>
<div style="position:absolute;top:1152.75px;line-height:20px;font-size:14px;font-weight:400;color:#a8a8a8;white-space:nowrap;letter-spacing:-0.14px;left:607.5px;">Jun 15, 02:00</div>
<div style="position:absolute;top:1152.75px;line-height:20px;font-size:14px;font-weight:400;color:#a8a8a8;white-space:nowrap;left:788.5px;">210</div>
<div style="position:absolute;left:903px;top:1151px;width:49px;height:24px;box-sizing:border-box;border:1px solid #824040;border-radius:6px;"></div>
<div style="position:absolute;top:1153.04px;line-height:20px;font-size:12px;font-weight:400;color:#f87171;white-space:nowrap;-webkit-text-stroke:0.6px #f87171;letter-spacing:0.04px;left:727.5px;width:400px;text-align:center;">Failed</div>
<div style="position:absolute;left:312px;top:1191px;width:718px;height:1px;box-sizing:border-box;background:#2a2a2a;"></div>
<div style="position:absolute;top:1209.75px;line-height:20px;font-size:14px;font-weight:400;color:#a8a8a8;white-space:nowrap;letter-spacing:0.23px;left:336.1px;">#1005</div>
<div style="position:absolute;top:1209.75px;line-height:20px;font-size:14px;font-weight:400;color:#a8a8a8;white-space:nowrap;left:458.5px;">Eve</div>
<div style="position:absolute;top:1209.75px;line-height:20px;font-size:14px;font-weight:400;color:#a8a8a8;white-space:nowrap;letter-spacing:-0.14px;left:607.5px;">Jun 14, 02:00</div>
<div style="position:absolute;top:1209.75px;line-height:20px;font-size:14px;font-weight:400;color:#a8a8a8;white-space:nowrap;left:788.5px;">67.25</div>
<div style="position:absolute;left:903px;top:1208px;width:40px;height:24px;box-sizing:border-box;border:1px solid #1c6b45;border-radius:6px;"></div>
<div style="position:absolute;top:1210.04px;line-height:20px;font-size:12px;font-weight:400;color:#22d37f;white-space:nowrap;-webkit-text-stroke:0.6px #22d37f;letter-spacing:-0.11px;left:723.0px;width:400px;text-align:center;">Paid</div>
<div style="position:absolute;top:890.66px;line-height:20px;font-size:16px;font-weight:700;color:#fff;white-space:nowrap;letter-spacing:-0.12px;left:1102.1px;">Popular Products</div>
<div style="position:absolute;top:927.75px;line-height:20px;font-size:14px;font-weight:400;color:#e5e5e5;white-space:nowrap;-webkit-text-stroke:0.6px #e5e5e5;letter-spacing:-0.24px;left:1125.9px;">Image</div>
<div style="position:absolute;top:927.75px;line-height:20px;font-size:14px;font-weight:400;color:#e5e5e5;white-space:nowrap;-webkit-text-stroke:0.6px #e5e5e5;letter-spacing:0.11px;left:1274.3px;">Product</div>
<div style="position:absolute;top:927.75px;line-height:20px;font-size:14px;font-weight:400;color:#e5e5e5;white-space:nowrap;-webkit-text-stroke:0.6px #e5e5e5;letter-spacing:-0.14px;left:1600px;">Stock</div>
<div style="position:absolute;left:1102px;top:963px;width:717px;height:1px;box-sizing:border-box;background:#2a2a2a;"></div>
<div id="img0" style="position:absolute;left:1126px;top:979.6px;width:40px;height:40px;border-radius:4px;overflow:hidden;background:#252525"><svg width="40" height="40" viewBox="0 0 40 40" style="display:block"><defs>
<linearGradient id="pb" x1="0" y1="0" x2="0" y2="1"><stop offset="0" stop-color="#4b4d4b"/><stop offset="1" stop-color="#383a39"/></linearGradient>
<radialGradient id="pt" cx="0.5" cy="0.25" r="0.75"><stop offset="0" stop-color="#7a7d94"/><stop offset="0.55" stop-color="#50536e"/><stop offset="1" stop-color="#1a1a34"/></radialGradient>
<radialGradient id="pl" cx="0.5" cy="0.75" r="0.7"><stop offset="0" stop-color="#94879a"/><stop offset="0.6" stop-color="#675e78"/><stop offset="1" stop-color="#2a2440"/></radialGradient>
</defs><rect width="40" height="40" fill="#252525"/><g transform="translate(7.9,5.2) scale(1.0,0.985)"><rect x="0" y="0" width="11" height="30" rx="1.6" fill="url(#pb)"/>
<rect x="10.3" y="0.3" width="13.7" height="29.7" rx="1.2" fill="#131127"/>
<ellipse cx="17.2" cy="6.6" rx="6" ry="5.4" fill="url(#pt)"/>
<ellipse cx="17.2" cy="10.4" rx="3.6" ry="2.6" fill="#15132c"/>
<rect x="10.6" y="12.8" width="13.2" height="1.1" fill="#55557a" opacity="0.6"/>
<ellipse cx="17.2" cy="22.3" rx="6.2" ry="6.4" fill="url(#pl)"/>
<ellipse cx="17.2" cy="19.6" rx="3.8" ry="2.7" fill="#17142e"/>
<ellipse cx="17.2" cy="17" rx="2" ry="1.5" fill="#b6b2e2"/>
<rect x="15.3" y="0.6" width="3.8" height="0.9" rx="0.4" fill="#000"/>
<circle cx="3.3" cy="3.5" r="2" fill="#0c0c0c"/><circle cx="3.3" cy="7.2" r="2" fill="#0c0c0c"/>
<ellipse cx="6.2" cy="4.6" rx="0.9" ry="0.6" fill="#cfcfcf"/>
<ellipse cx="7.1" cy="15" rx="1.2" ry="1.4" fill="#2b2d2c"/></g></svg></div>
<div style="position:absolute;top:989.95px;line-height:20px;font-size:14px;font-weight:400;color:#a8a8a8;white-space:nowrap;left:1274.3px;">MacBook Pro 16"</div>
<div style="position:absolute;left:1600px;top:987.6px;width:80px;height:24px;box-sizing:border-box;background:#332b17;border:1px solid #6b5416;border-radius:12px;"></div>
<div style="position:absolute;top:989.64px;line-height:20px;font-size:12px;font-weight:400;color:#facc15;white-space:nowrap;-webkit-text-stroke:0.6px #facc15;letter-spacing:0.03px;left:1440.0px;width:400px;text-align:center;">Low Stock</div>
<div style="position:absolute;left:1102px;top:1036px;width:717px;height:1px;box-sizing:border-box;background:#2a2a2a;"></div>
<div id="img1" style="position:absolute;left:1126px;top:1052.6px;width:40px;height:40px;border-radius:4px;overflow:hidden;background:#252525"><svg width="40" height="40" viewBox="0 0 40 40" style="display:block"><defs>
<linearGradient id="pb2" x1="0" y1="0" x2="0" y2="1"><stop offset="0" stop-color="#4b4d4b"/><stop offset="1" stop-color="#383a39"/></linearGradient>
<radialGradient id="pt2" cx="0.5" cy="0.25" r="0.75"><stop offset="0" stop-color="#7a7d94"/><stop offset="0.55" stop-color="#50536e"/><stop offset="1" stop-color="#1a1a34"/></radialGradient>
<radialGradient id="pl2" cx="0.5" cy="0.75" r="0.7"><stop offset="0" stop-color="#94879a"/><stop offset="0.6" stop-color="#675e78"/><stop offset="1" stop-color="#2a2440"/></radialGradient>
</defs><rect width="40" height="40" fill="#131127"/><g transform="translate(0,-5) scale(1.6667)"><rect x="0" y="0" width="11" height="30" rx="1.6" fill="url(#pb2)"/>
<rect x="10.3" y="0.3" width="13.7" height="29.7" rx="1.2" fill="#131127"/>
<ellipse cx="17.2" cy="6.6" rx="6" ry="5.4" fill="url(#pt2)"/>
<ellipse cx="17.2" cy="10.4" rx="3.6" ry="2.6" fill="#15132c"/>
<rect x="10.6" y="12.8" width="13.2" height="1.1" fill="#55557a" opacity="0.6"/>
<ellipse cx="17.2" cy="22.3" rx="6.2" ry="6.4" fill="url(#pl2)"/>
<ellipse cx="17.2" cy="19.6" rx="3.8" ry="2.7" fill="#17142e"/>
<ellipse cx="17.2" cy="17" rx="2" ry="1.5" fill="#b6b2e2"/>
<rect x="15.3" y="0.6" width="3.8" height="0.9" rx="0.4" fill="#000"/>
<circle cx="3.3" cy="3.5" r="2" fill="#0c0c0c"/><circle cx="3.3" cy="7.2" r="2" fill="#0c0c0c"/>
<ellipse cx="6.2" cy="4.6" rx="0.9" ry="0.6" fill="#cfcfcf"/>
<ellipse cx="7.1" cy="15" rx="1.2" ry="1.4" fill="#2b2d2c"/></g><rect x="0" y="0" width="0.7" height="40" fill="#9a9a9a"/><rect x="39.2" y="0" width="0.8" height="40" fill="#b5b5b5"/></svg></div>
<div style="position:absolute;top:1062.95px;line-height:20px;font-size:14px;font-weight:400;color:#a8a8a8;white-space:nowrap;left:1274.3px;">iPhone 15 Pro</div>
<div style="position:absolute;left:1600px;top:1060.6px;width:96px;height:24px;box-sizing:border-box;background:#352020;border:1px solid #8a4040;border-radius:12px;"></div>
<div style="position:absolute;top:1062.64px;line-height:20px;font-size:12px;font-weight:400;color:#f87171;white-space:nowrap;-webkit-text-stroke:0.6px #f87171;letter-spacing:0.23px;left:1448.0px;width:400px;text-align:center;">Out Of Stock</div>
<div style="position:absolute;left:1102px;top:1109px;width:717px;height:1px;box-sizing:border-box;background:#2a2a2a;"></div>
<div id="img2" style="position:absolute;left:1126px;top:1125.6px;width:40px;height:40px;border-radius:4px;overflow:hidden;background:#252525"><svg width="40" height="40" viewBox="0 0 40 40" style="display:block"><defs>
<linearGradient id="mb" x1="0" y1="0" x2="1" y2="1"><stop offset="0" stop-color="#1a16b8"/><stop offset="0.55" stop-color="#3a1fd6"/><stop offset="1" stop-color="#4a1fc0"/></linearGradient>
<linearGradient id="my" x1="0" y1="0" x2="1" y2="0"><stop offset="0" stop-color="#f6f0ff"/><stop offset="0.35" stop-color="#f6d21c"/><stop offset="0.7" stop-color="#f49a20"/><stop offset="1" stop-color="#e8e8ff"/></linearGradient>
</defs>
<rect width="40" height="40" fill="#252525"/>
<rect x="0" y="5" width="40" height="22" fill="#000"/>
<path d="M0,15.4 L7,15 L13,13 L20,12.2 L24,13.8 L28,19 L33,24 L40,22 L40,27 L0,27 Z" fill="url(#mb)"/>
<path d="M0,13.2 L5,11.6 L12,9 L19,6.4 L24,6.2 L27,7.4 L27.5,9.8 L24,10.6 L21,9.6 L16,10.4 L11,12.2 L7,14.2 L0,14.4 Z" fill="url(#my)"/>
<path d="M7,14 L11,12.3 L16,10.5 L21,9.8 L24,10.8 L26,13 L24,13.6 L20,12 L13,12.8 L8,15 Z" fill="#120a58"/>
<path d="M8,14.2 L12,12.4 L15,11.6 L12,13.2 Z" fill="#f4f0ff"/>
<path d="M24,9 L28,8 L32,7.2 L33,10 L34,13 L33.5,19 L36,23 L33,23.5 L29,19.5 L26,14 Z" fill="#2b48e6"/>
<path d="M25,9.5 L27.5,9.5 L29,17 L27,15 Z" fill="#e0281c"/>
<path d="M30,12.5 L34,12 L33,19.5 Z" fill="#f01c9a"/>
<path d="M27.5,7.5 L32,6.8 L32.5,8.6 L28.5,9.2 Z" fill="#f2c6b0"/>
<path d="M29,13 L30.5,13 L32,20 L30.5,20 Z" fill="#56a7ee"/>
<path d="M26.5,13.5 L28,14 L30,19.5 L28.6,19 Z" fill="#f05a8a"/>
<path d="M32,25 L36,23.5 L40,22 L40,27 L33,27 Z" fill="#8a6cf4"/>
<path d="M34,26 L40,24.5 L40,27 L34,27 Z" fill="#e6d8ff"/>
<rect x="36" y="24.6" width="3" height="1.3" fill="#1a18e0"/>
<rect x="18.9" y="27" width="2.2" height="6.3" fill="#d4d4d4"/>
<path d="M11.2,32.8 H28.4 L27.8,35 H11.9 Z" fill="#cfcfcf"/>
</svg></div>
<div style="position:absolute;top:1135.95px;line-height:20px;font-size:14px;font-weight:400;color:#a8a8a8;white-space:nowrap;left:1274.3px;">Dell UltraSharp 27</div>
<div style="position:absolute;left:1600px;top:1133.6px;width:68px;height:24px;box-sizing:border-box;background:#17281f;border:1px solid #1a6b42;border-radius:12px;"></div>
<div style="position:absolute;top:1135.64px;line-height:20px;font-size:12px;font-weight:400;color:#1fdc82;white-space:nowrap;-webkit-text-stroke:0.6px #1fdc82;letter-spacing:-0.01px;left:1434.0px;width:400px;text-align:center;">In Stock</div>
<div style="position:absolute;left:1102px;top:1182px;width:717px;height:1px;box-sizing:border-box;background:#2a2a2a;"></div>
<div id="img3" style="position:absolute;left:1126px;top:1198.6px;width:40px;height:40px;border-radius:4px;overflow:hidden;background:#252525"><svg width="40" height="40" viewBox="0 0 40 40" style="display:block"><defs>
<linearGradient id="ma" x1="0" y1="0" x2="1" y2="0"><stop offset="0" stop-color="#232323"/><stop offset="0.28" stop-color="#2b2b2c"/><stop offset="0.32" stop-color="#343538"/><stop offset="0.7" stop-color="#4a4b4f"/><stop offset="1" stop-color="#5d5e62"/></linearGradient>
<linearGradient id="mw" x1="0" y1="0" x2="1" y2="0"><stop offset="0" stop-color="#4a4a4a"/><stop offset="0.4" stop-color="#c4c4c4"/><stop offset="0.6" stop-color="#6a6a6a"/><stop offset="1" stop-color="#8c8c8c"/></linearGradient>
<linearGradient id="mr" x1="0" y1="0" x2="1" y2="0"><stop offset="0" stop-color="#3a3b3f" stop-opacity="0"/><stop offset="1" stop-color="#a2a2a6"/></linearGradient>
<linearGradient id="ml" x1="0" y1="0" x2="1" y2="1"><stop offset="0" stop-color="#262727"/><stop offset="0.55" stop-color="#424446"/><stop offset="1" stop-color="#7c7d80"/></linearGradient>
</defs>
<rect width="40" height="40" fill="url(#ma)"/>
<linearGradient id="mbd" x1="0.2" y1="1" x2="1" y2="0"><stop offset="0" stop-color="#303134"/><stop offset="0.6" stop-color="#3a3b3f"/><stop offset="1" stop-color="#55565a"/></linearGradient><path d="M11.5,13.5 H40 V40 H11.5 Z" fill="url(#mbd)"/>
<path d="M28,13 L40,16 L40,0 L28,0 Z" fill="#525357"/>
<path d="M12,0 H22 V12 L12,13 Z" fill="#333437"/>
<path d="M2,14 Q8,11 10.5,9 L11.5,40 H0 V22 Q0,16 2,14 Z" fill="url(#ml)"/>
<path d="M11.5,26 Q15,33 17.5,40 H11.5 Z" fill="#5c5e61" opacity="0.75"/>
<path d="M30,18 L40,16 V40 H30 Q37,30 30,18 Z" fill="url(#mr)"/>
<rect x="22" y="0" width="5" height="6.5" rx="1" fill="url(#mw)"/>
<rect x="22.4" y="6.5" width="4.2" height="9" fill="#3c3d40"/>
<rect x="23" y="11.3" width="3" height="4" rx="0.6" fill="#2c2d30" stroke="#4c4d50" stroke-width="0.3"/>
<rect x="9.8" y="14.5" width="1.8" height="8" rx="0.6" fill="#c8c8c8"/>
<path d="M12.5,11.8 L14.8,11.2 L14.8,10.2" stroke="#6a6b6e" stroke-width="0.5" fill="none"/>
<path d="M12,12.6 L21,12.2 M28,13 L39,15.8" stroke="#242527" stroke-width="0.6"/>
<path d="M0,35 L3,40 H0 Z" fill="#1b1b1b"/>
</svg></div>
<div style="position:absolute;top:1208.95px;line-height:20px;font-size:14px;font-weight:400;color:#a8a8a8;white-space:nowrap;left:1274.3px;">Logitech MX Master 3S</div>
<div style="position:absolute;left:1600px;top:1206.6px;width:80px;height:24px;box-sizing:border-box;background:#332b17;border:1px solid #6b5416;border-radius:12px;"></div>
<div style="position:absolute;top:1208.64px;line-height:20px;font-size:12px;font-weight:400;color:#facc15;white-space:nowrap;-webkit-text-stroke:0.6px #facc15;letter-spacing:0.03px;left:1440.0px;width:400px;text-align:center;">Low Stock</div>
</body></html>
